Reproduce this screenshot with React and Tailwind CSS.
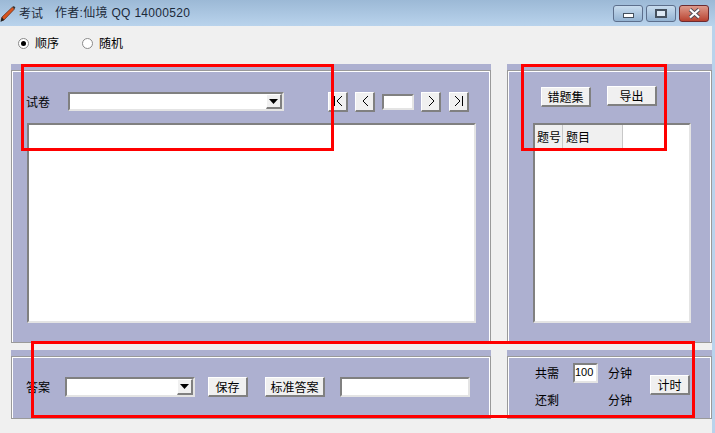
const cjk = "font-['Noto_Sans_CJK_SC','Liberation_Sans',sans-serif]";
const raised =
  "flex items-center justify-center bg-[#f0f0f0] border-t border-l border-t-white border-l-white border-b-2 border-r-2 border-b-[#808080] border-r-[#808080] text-[12px] leading-none text-black";
const sunken =
  "bg-white border-t-2 border-l-2 border-t-[#808080] border-l-[#808080] border-b-2 border-r-2 border-b-[#e4e4e4] border-r-[#e4e4e4]";

function Panel({ className, children }) {
  return (
    <div className={`bg-[#adb0d0] pt-[6px] ${className}`}>
      <div className="h-full border border-[#9a9a9a]">
        <div className="h-full border-t border-l border-r border-white">{children}</div>
      </div>
    </div>
  );
}

function Radio({ checked, label }) {
  return (
    <label className="flex items-center gap-[6px] text-[12px] text-black">
      <span className="flex h-[11px] w-[11px] items-center justify-center rounded-full border border-[#8a8a8a] bg-white">
        {checked && <span className="h-[5px] w-[5px] rounded-full bg-black" />}
      </span>
      {label}
    </label>
  );
}

function Combo({ className }) {
  return (
    <div className={`${sunken} flex justify-end ${className}`}>
      <div className={`${raised} w-[16px]`}>
        <svg width="9" height="5" viewBox="0 0 9 5">
          <path d="M0 0h9L4.5 5z" fill="#000" />
        </svg>
      </div>
    </div>
  );
}

function NavButton({ d, className = "" }) {
  return (
    <button className={`${raised} h-[20px] w-[20px] ${className}`}>
      <svg width="14" height="14" viewBox="0 0 14 14" fill="none" stroke="#000" strokeWidth="1">
        <path d={d} />
      </svg>
    </button>
  );
}

function WinButton({ className, children }) {
  return (
    <div
      className={`flex h-[17px] w-[30px] items-center justify-center rounded-[3px] border border-[#5d6f8c] ${className}`}
    >
      {children}
    </div>
  );
}

function RedBox({ className }) {
  return <div className={`pointer-events-none absolute border-[3px] border-[#ff0000] ${className}`} />;
}

export default function App() {
  return (
    <div className={`relative flex h-[433px] w-[715px] flex-col overflow-hidden bg-[#b9d3ec] ${cjk}`}>
      {/* title bar */}
      <div className="flex h-[26px] items-center bg-gradient-to-b from-[#9cb9d6] to-[#b9d3ec] pr-[6px]">
        <svg width="16" height="18" viewBox="0 0 16 18" className="mt-[2px]">
          <path d="M1 15.5L2 12 12.5 2l2 2L4 15z" fill="#d9541e" stroke="#5a2a14" strokeWidth="0.7" />
          <path d="M12.5 2l1.3-1 1.6 1.6-1 1.4z" fill="#333" />
          <path d="M0.5 17l1.4-5 2.2 3z" fill="#222" />
        </svg>
        <span className="ml-[3px] text-[12px] text-[#1c2a3a]">考试</span>
        <span className="ml-[12px] font-['Liberation_Sans','Noto_Sans_CJK_SC',sans-serif] text-[12px] tracking-[0.3px] text-[#1c2a3a]">
          作者:仙境 QQ 14000520
        </span>
        <div className="ml-auto flex gap-[3px]">
          <WinButton className="bg-gradient-to-b from-[#c8dcee] to-[#94b3d2]">
            <span className="mt-[4px] h-[5px] w-[11px] border border-[#44505e] bg-white" />
          </WinButton>
          <WinButton className="bg-gradient-to-b from-[#c8dcee] to-[#94b3d2]">
            <span className="h-[9px] w-[12px] border-2 border-[#44505e] bg-[#dce8f4]" />
          </WinButton>
          <WinButton className="border-[#6d2b30] bg-gradient-to-b from-[#dd9a8c] to-[#b8412f]">
            <svg width="15" height="11" viewBox="0 0 15 11">
              <path d="M3 1.5l9 8M12 1.5l-9 8" stroke="#4a4a55" strokeWidth="3.8" />
              <path d="M3 1.5l9 8M12 1.5l-9 8" stroke="#fff" strokeWidth="2.2" />
            </svg>
          </WinButton>
        </div>
      </div>

      {/* client area */}
      <div className="mr-[3px] flex flex-1 flex-col bg-[#f0f0f0] pl-[11px]">
        <div className="flex h-[38px] items-center gap-[23px] pb-[4px] pl-[7px]">
          <Radio checked label="顺序" />
          <Radio label="随机" />
        </div>

        <div className="flex h-[279px] gap-[16px]">
          <Panel className="w-[480px]">
            <div className="flex h-[51px] items-center pl-[13px] pt-[8px]">
              <span className="w-[42px] text-[12px] text-black">试卷</span>
              <Combo className="h-[19px] w-[216px]" />
              <NavButton className="ml-[44px]" d="M3.5 2v10M11 2L6 7l5 5" />
              <NavButton className="ml-[7px]" d="M10 2L5 7l5 5" />
              <div className={`${sunken} ml-[7px] h-[16px] w-[32px]`} />
              <NavButton className="ml-[7px]" d="M5 2l5 5-5 5" />
              <NavButton className="ml-[8px]" d="M3 2l5 5-5 5M10.5 2v10" />
            </div>
            <div className={`${sunken} ml-[14px] h-[200px] w-[449px]`} />
          </Panel>

          <Panel className="w-[205px]">
            <div className="flex h-[51px] items-start pl-[32px] pt-[14px]">
              <button className={`${raised} mt-[1px] h-[20px] w-[50px]`}>错题集</button>
              <button className={`${raised} ml-[16px] h-[20px] w-[50px]`}>导出</button>
            </div>
            <div className={`${sunken} ml-[24px] h-[200px] w-[158px]`}>
              <div className="flex h-[23px] bg-white text-[12px] leading-[23px] text-black">
                <div className="w-[28px] border-r border-[#c8c8c8] bg-[#f0f0f0] pl-[2px]">题号</div>
                <div className="w-[60px] border-r border-[#c8c8c8] bg-[#f0f0f0] pl-[3px]">题目</div>
              </div>
            </div>
          </Panel>
        </div>

        <div className="mt-[7px] flex h-[69px] gap-[16px]">
          <Panel className="w-[480px]">
            <div className="flex h-full items-center pb-[2px] pl-[13px]">
              <span className="w-[39px] text-[12px] text-black">答案</span>
              <Combo className="h-[20px] w-[130px]" />
              <button className={`${raised} ml-[13px] h-[20px] w-[40px]`}>保存</button>
              <button className={`${raised} ml-[17px] h-[20px] w-[60px]`}>标准答案</button>
              <div className={`${sunken} ml-[15px] h-[20px] w-[130px]`} />
            </div>
          </Panel>

          <Panel className="w-[205px]">
            <div className="flex h-full items-center pb-[5px] pl-[26px] text-[12px] text-black">
              <div className="grid grid-cols-[38px_35px_auto] items-center gap-y-[8px]">
                <span>共需</span>
                <div className="flex h-[20px] w-[25px] items-center border-t-2 border-l-2 border-b-2 border-r-2 border-t-[#808080] border-l-[#808080] border-b-[#e4e4e4] border-r-[#e4e4e4] bg-white font-['Liberation_Sans',sans-serif] text-[11px]">
                  100
                </div>
                <span>分钟</span>
                <span>还剩</span>
                <span />
                <span>分钟</span>
              </div>
              <button className={`${raised} mb-[1px] ml-[18px] h-[20px] w-[40px]`}>计时</button>
            </div>
          </Panel>
        </div>
      </div>

      {/* annotation boxes drawn on top of the window */}
      <RedBox className="left-[21px] top-[64px] h-[87px] w-[313px]" />
      <RedBox className="left-[521px] top-[64px] h-[87px] w-[146px]" />
      <RedBox className="left-[31px] top-[341px] h-[77px] w-[664px]" />
    </div>
  );
}
